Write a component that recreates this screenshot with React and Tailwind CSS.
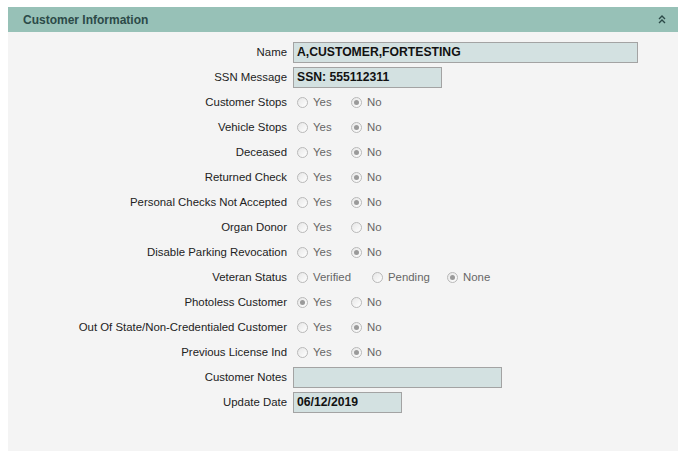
import React from "react";

const Radio = ({ checked, label, className = "" }) => (
  <span className={"flex items-center " + className}>
    <span className="relative w-[11px] h-[11px] rounded-full border border-[#b9b9b9] bg-gradient-to-br from-[#e6e6e6] to-[#ffffff] flex items-center justify-center">
      {checked && <span className="w-[5px] h-[5px] rounded-full bg-[#9a9a9a]" />}
    </span>
    <span className="ml-[5px] text-[#666]">{label}</span>
  </span>
);

const YesNo = ({ value }) => (
  <div className="flex items-center pl-[4px]">
    <Radio checked={value === "yes"} label="Yes" className="w-[54px]" />
    <Radio checked={value === "no"} label="No" />
  </div>
);

const Box = ({ w, children }) => (
  <div
    className={
      "h-[21px] border border-[#a3a3a3] bg-[#d3e1e1] flex items-center pl-[3px] font-bold text-[12.2px] text-[#111] " +
      w
    }
  >
    {children}
  </div>
);

const rows = [
  ["Name", <Box w="w-[345px]">A,CUSTOMER,FORTESTING</Box>],
  ["SSN Message", <Box w="w-[149px]">SSN: 555112311</Box>],
  ["Customer Stops", <YesNo value="no" />],
  ["Vehicle Stops", <YesNo value="no" />],
  ["Deceased", <YesNo value="no" />],
  ["Returned Check", <YesNo value="no" />],
  ["Personal Checks Not Accepted", <YesNo value="no" />],
  ["Organ Donor", <YesNo value="none" />],
  ["Disable Parking Revocation", <YesNo value="no" />],
  [
    "Veteran Status",
    <div className="flex items-center pl-[4px]">
      <Radio label="Verified" className="w-[75px]" />
      <Radio label="Pending" className="w-[75px]" />
      <Radio checked label="None" />
    </div>,
  ],
  ["Photoless Customer", <YesNo value="yes" />],
  ["Out Of State/Non-Credentialed Customer", <YesNo value="no" />],
  ["Previous License Ind", <YesNo value="no" />],
  ["Customer Notes", <Box w="w-[209px]"></Box>],
  ["Update Date", <Box w="w-[109px]">06/12/2019</Box>],
];

export default function App() {
  return (
    <div
      className="w-[692px] h-[458px] bg-white pt-[7px] pl-[8px]"
      style={{ fontFamily: '"Liberation Sans", Arial, sans-serif' }}
    >
      <div className="w-[670px] h-[444px] bg-[#f4f4f4] flex flex-col">
        <div className="h-[25px] bg-[#97c1b7] flex items-center justify-between pl-[15px] pr-[12px]">
          <span className="font-bold text-[12px] text-[#2c4a48]">Customer Information</span>
          <svg width="8" height="9" viewBox="0 0 8 9" fill="none" stroke="#2c4a48" strokeWidth="1.4">
            <polyline points="1,4 4,1 7,4" />
            <polyline points="1,8 4,5 7,8" />
          </svg>
        </div>
        <div className="pt-[8px] flex flex-col text-[11.4px]">
          {rows.map(([label, content], i) => (
            <div key={i} className="h-[25px] grid grid-cols-[279px_1fr] gap-x-[6px] items-center">
              <span className="text-right text-[#222] whitespace-nowrap">{label}</span>
              <div>{content}</div>
            </div>
          ))}
        </div>
      </div>
    </div>
  );
}
